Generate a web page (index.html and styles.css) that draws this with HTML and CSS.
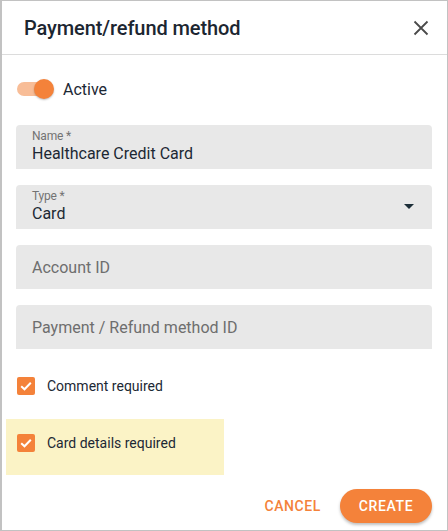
FILE: index.html
```html
<!DOCTYPE html>
<html>
<head>
<meta charset="utf-8">
<link rel="stylesheet" href="styles.css">
</head>
<body>
<div class="dialog">
  <div class="header">
    <h1 class="title">Payment/refund method</h1>
    <svg class="close" width="16" height="16" viewBox="0 0 16 16"><path d="M1.5 1.5 L14.5 14.5 M14.5 1.5 L1.5 14.5" stroke="#4a4a4a" stroke-width="1.8" fill="none"/></svg>
  </div>
  <div class="content">
    <div class="toggle-row">
      <span class="switch"><span class="track"></span><span class="thumb"></span></span>
      <span class="toggle-label">Active</span>
    </div>
    <div class="field filled">
      <span class="label">Name *</span>
      <span class="value">Healthcare Credit Card</span>
    </div>
    <div class="field filled select">
      <span class="label">Type *</span>
      <span class="value">Card</span>
      <span class="arrow"></span>
    </div>
    <div class="field empty"><span class="placeholder">Account ID</span></div>
    <div class="field empty"><span class="placeholder">Payment / Refund method ID</span></div>
    <div class="check-row">
      <span class="box"><svg width="18" height="18" viewBox="0 0 18 18"><path d="M4.2 9.2 L7.5 12.3 L13.8 5.8" stroke="#fff" stroke-width="2" fill="none"/></svg></span>
      <span class="check-label">Comment required</span>
    </div>
    <div class="highlight">
      <div class="check-row inner">
        <span class="box"><svg width="18" height="18" viewBox="0 0 18 18"><path d="M4.2 9.2 L7.5 12.3 L13.8 5.8" stroke="#fff" stroke-width="2" fill="none"/></svg></span>
        <span class="check-label">Card details required</span>
      </div>
    </div>
  </div>
  <div class="footer">
    <button class="btn cancel">Cancel</button>
    <button class="btn create">Create</button>
  </div>
</div>
</body>
</html>
```
FILE: styles.css
```css
html, body { margin: 0; padding: 0; background: #fff; }
body { font-family: Roboto, "Noto Sans", sans-serif; color: #1c2834; }
.dialog {
  width: 448px; height: 531px; box-sizing: border-box;
  border: 1px solid #c2c2c2; border-left-width: 2px;
  display: flex; flex-direction: column; position: relative;
}
.header {
  height: 54px; flex: none; box-sizing: border-box;
  border-bottom: 1px solid #dcdcdc;
  display: flex; align-items: center; justify-content: space-between;
  padding: 0 18px 0 22px;
}
.title { margin: 0; font-size: 20px; font-weight: 500; color: #1c2631; letter-spacing: -0.1px; }
.close { display: block; }
.content { padding: 0 15px 0 14px; flex: 1; }
.toggle-row { display: flex; align-items: center; height: 36px; margin-top: 16px; }
.switch { position: relative; width: 36px; height: 20px; margin-left: 1px; }
.track { position: absolute; left: 0; top: 3px; width: 33px; height: 14px; border-radius: 7px; background: #f8bd97; }
.thumb { position: absolute; left: 17px; top: 0; width: 20px; height: 20px; border-radius: 50%; background: #f4823a; box-shadow: 0 1px 2px rgba(0,0,0,0.25); }
.toggle-label { margin-left: 10px; font-size: 16px; color: #1c2834; }
.field {
  position: relative; height: 44px; box-sizing: border-box;
  background: #e8e8e8; border-radius: 4px 4px 0 0;
  margin-top: 16px; padding: 0 16px;
  display: flex; flex-direction: column; justify-content: center;
}
.toggle-row + .field { margin-top: 18px; }
.label { font-size: 12px; color: #737373; line-height: 14px; margin-top: -1px; letter-spacing: -0.2px; }
.value { font-size: 16px; color: #1c2834; line-height: 20px; margin-top: 1px; }
.placeholder { font-size: 16px; color: #6e6e6e; }
.arrow {
  position: absolute; right: 18px; top: 19px;
  width: 0; height: 0;
  border-left: 5px solid transparent; border-right: 5px solid transparent;
  border-top: 5px solid #1c2e38;
}
.check-row { display: flex; align-items: center; height: 18px; margin-top: 28px; margin-left: 1px; }
.box { width: 18px; height: 18px; border-radius: 2px; background: #f4823a; display: block; }
.box svg { display: block; }
.check-label { margin-left: 12px; font-size: 14px; color: #1c2834; }
.highlight {
  width: 218px; height: 56px; box-sizing: border-box;
  background: #fbf3c6; margin-top: 24px; margin-left: -10px;
  padding: 15px 0 0 10px;
}
.check-row.inner { margin-top: 0; }
.footer {
  display: flex; justify-content: flex-end; align-items: center;
  padding: 0 15px 7px 0; gap: 19px;
}
.btn {
  font-family: Roboto, "Noto Sans", sans-serif; font-size: 14px; font-weight: 500;
  text-transform: uppercase; letter-spacing: 0.6px; border: none; cursor: pointer;
}
.cancel { background: transparent; color: #f4823a; padding: 0; height: 34px; }
.create {
  background: #f4823a; color: #fff; height: 34px; width: 92px; border-radius: 17px;
  box-shadow: 0 2px 3px rgba(0,0,0,0.25);
}
```
